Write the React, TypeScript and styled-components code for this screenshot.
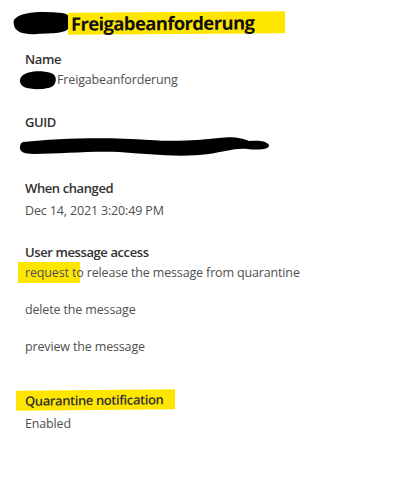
import React from "react";
import styled, { createGlobalStyle } from "styled-components";

const Global = createGlobalStyle`
  html, body { margin: 0; padding: 0; background: #ffffff; }
  body { font-family: "Open Sans", "Noto Sans", sans-serif; }
`;

const Page = styled.div`
  width: 400px;
  height: 489px;
  box-sizing: border-box;
  padding: 10px 0 0 25px;
  display: flex;
  flex-direction: column;
  background: #fff;
  overflow: hidden;
`;

const TitleRow = styled.div`
  display: flex;
  align-items: center;
  margin-left: -13px;
  height: 26px;
`;

const Scribble = styled.svg`
  display: block;
  flex: none;
`;

const TitleMark = styled.span`
  display: inline-block;
  background: #ffe600;
  margin-left: -4px;
  padding: 0 31px 0 3px;
  height: 22px;
  line-height: 22px;
  transform: skewY(-0.4deg);
`;

const Title = styled.h1`
  margin: 0;
  font-size: 18.5px;
  font-weight: 700;
  color: #111;
  letter-spacing: -0.65px;
`;

const Field = styled.div<{ $top: number }>`
  margin-top: ${(p) => p.$top}px;
  display: flex;
  flex-direction: column;
`;

const Label = styled.div`
  font-size: 13px;
  font-weight: 600;
  line-height: 20px;
  color: #323130;
  letter-spacing: -0.4px;
`;

const Value = styled.div<{ $gap?: number }>`
  font-size: 12.5px;
  line-height: 20px;
  color: #505050;
  margin-top: ${(p) => p.$gap ?? 1}px;
  letter-spacing: -0.15px;
  display: flex;
  align-items: center;
`;

const Marker = styled.span`
  background: #ffe600;
  padding: 2px 0 2px 7px;
  margin-left: -7px;
`;

const HalfMarker = styled.span`
  background: linear-gradient(to right, #ffe600 0 55%, transparent 55%);
  padding: 2px 0;
`;

const LabelMark = styled.span`
  display: inline-block;
  background: #ffe600;
  margin-left: -9px;
  padding: 0 12px 0 9px;
  transform: skewY(-0.6deg);
`;

const ValueScribble = styled.svg`
  display: block;
  margin-left: -6px;
  flex: none;
`;

const GuidScribble = styled.svg`
  display: block;
  margin-left: -6px;
`;

export default function App() {
  return (
    <Page>
      <Global />
      <TitleRow>
        <Scribble width="60" height="26" viewBox="0 0 60 26">
          <path
            d="M4 8 C 10 2, 30 1, 50 3 C 58 4, 60 10, 58 16 C 56 24, 40 23, 25 24 C 12 25, 3 22, 2 15 C 1 11, 2 9, 4 8 Z"
            fill="#000"
          />
        </Scribble>
        <TitleMark>
          <Title as="span">Freigabeanforderung</Title>
        </TitleMark>
      </TitleRow>

      <Field $top={13}>
        <Label>Name</Label>
        <Value>
          <ValueScribble width="38" height="20" viewBox="0 0 38 20">
            <path
              d="M3 6 C 8 1, 22 0, 32 3 C 38 5, 38 12, 34 16 C 28 20, 12 20, 5 17 C 0 14, 0 9, 3 6 Z"
              fill="#000"
            />
          </ValueScribble>
          <span>Freigabeanforderung</span>
        </Value>
      </Field>

      <Field $top={22}>
        <Label>GUID</Label>
        <Value $gap={0}>
          <GuidScribble width="252" height="28" viewBox="0 0 252 28">
            <path
              d="M4 10 C 40 6, 90 5, 130 8 C 160 10, 180 8, 200 6 C 215 4, 225 7, 230 9 C 240 8, 248 9, 250 13 C 250 18, 240 18, 228 17 C 215 16, 205 20, 190 22 C 160 26, 130 22, 100 20 C 70 19, 40 22, 15 22 C 4 22, 1 19, 1 16 C 1 12, 2 11, 4 10 Z"
              fill="#000"
            />
          </GuidScribble>
        </Value>
      </Field>

      <Field $top={18}>
        <Label>When changed</Label>
        <Value $gap={3}>Dec 14, 2021 3:20:49 PM</Value>
      </Field>

      <Field $top={21}>
        <Label>User message access</Label>
        <Value>
          <span>
            <Marker>request t</Marker>
            <HalfMarker>o</HalfMarker> release the message from quarantine
          </span>
        </Value>
        <Value $gap={17}>delete the message</Value>
        <Value $gap={17}>preview the message</Value>
      </Field>

      <Field $top={33}>
        <Label>
          <LabelMark>Quarantine notification</LabelMark>
        </Label>
        <Value $gap={4}>Enabled</Value>
      </Field>
    </Page>
  );
}
